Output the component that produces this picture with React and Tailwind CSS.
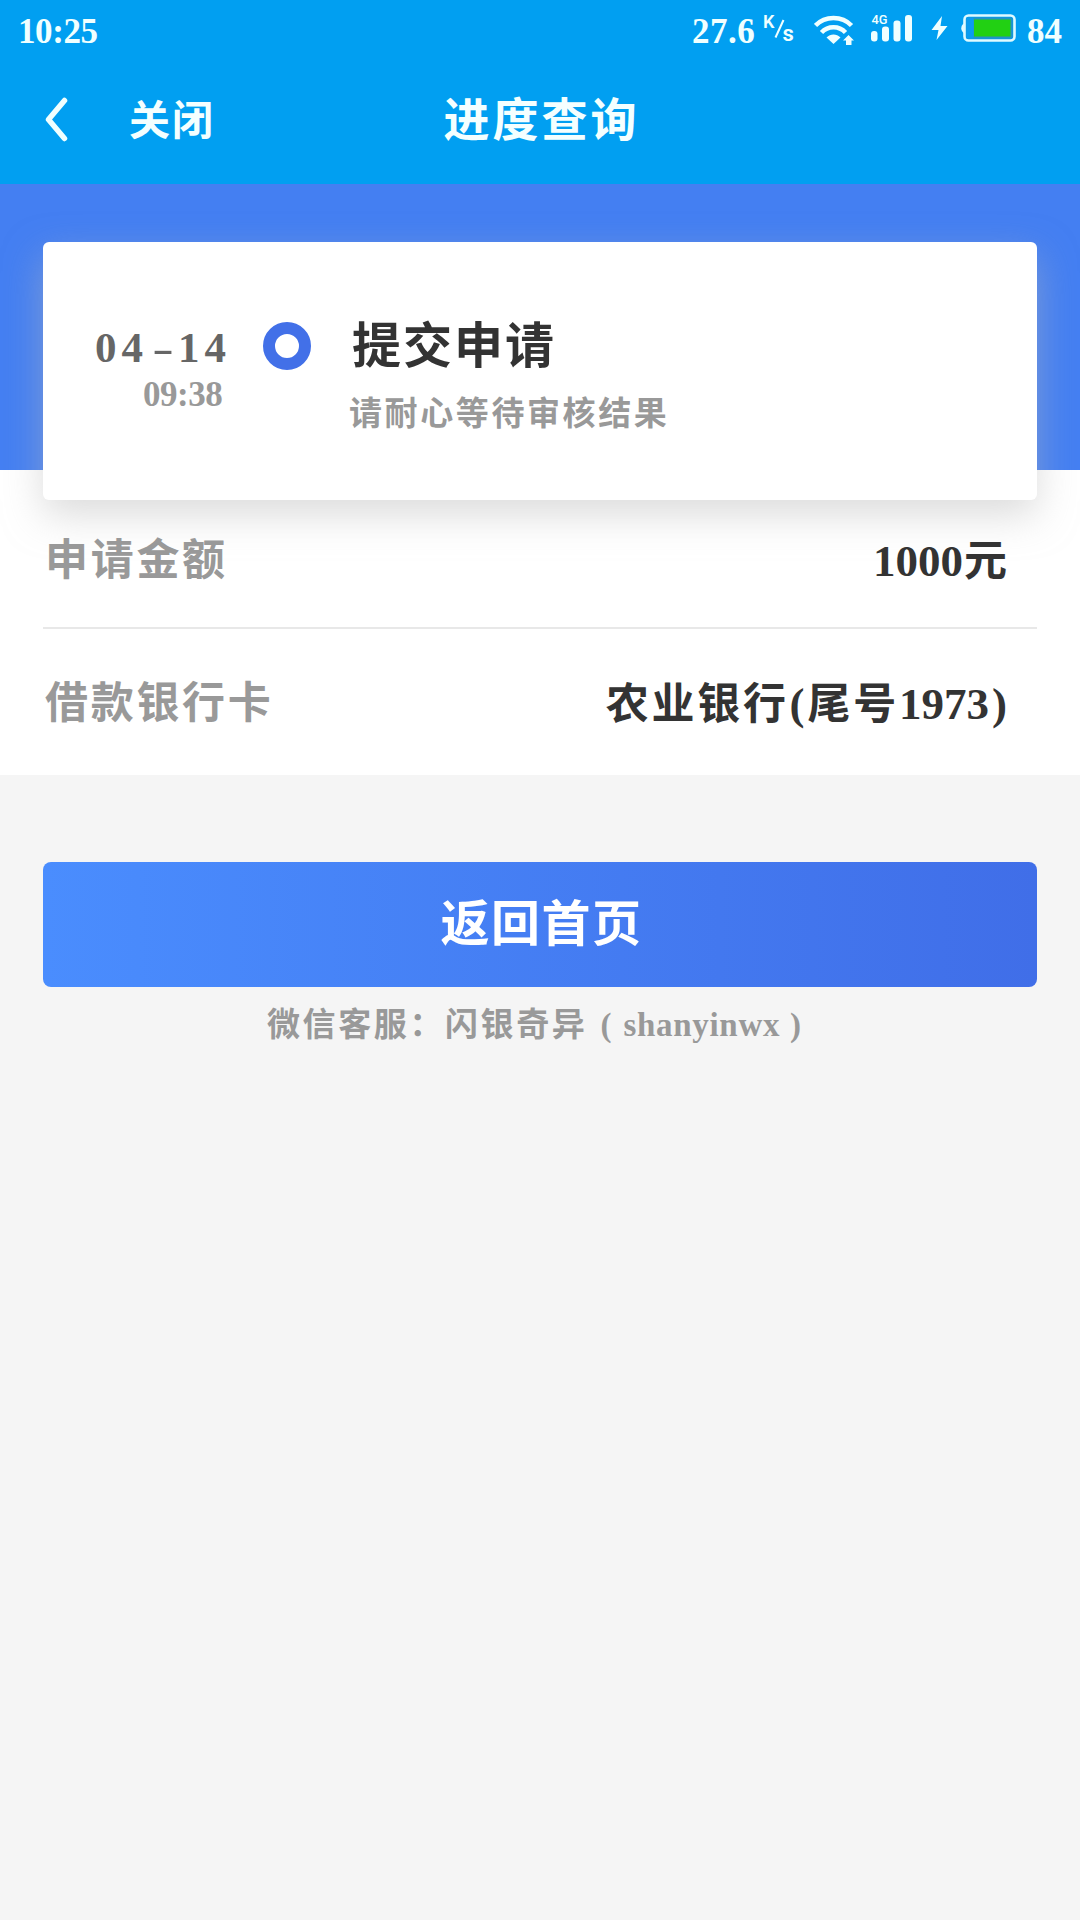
function WifiIcon() {
  return (
    <svg className="block h-[34px] w-[42px]" viewBox="0 0 42 34" fill="none">
      <g stroke="#f0ffff" strokeWidth="4.500">
        <path d="M1.500 13.500C11 3.500 28 3.500 37.500 13.500" />
        <path d="M7.500 20.500C14 13.500 25 13.500 31.500 20.500" />
      </g>
      <path d="M12.500 25.500C16.500 21.500 22.500 21.500 26.500 25.500L19.500 32Z" fill="#f0ffff" />
      <path d="M34.500 23L40 28.500H37.500V33H32V28.500H29Z" fill="#f0ffff" />
    </svg>
  );
}

function SignalIcon() {
  return (
    <svg className="block h-[34px] w-[42px]" viewBox="0 0 42 34" fill="#f0ffff">
      <text x="0.500" y="12" fontFamily="Roboto" fontSize="13" fontWeight="500" textLength="16" lengthAdjust="spacingAndGlyphs">4G</text>
      <rect x="0" y="19" width="6.500" height="10.500" rx="3" />
      <rect x="11" y="14.500" width="7" height="15" rx="3" />
      <rect x="22.500" y="8.500" width="7" height="21" rx="3" />
      <rect x="34" y="3" width="7" height="26.500" rx="3" />
    </svg>
  );
}

function BatteryIcon() {
  return (
    <svg className="block h-[34px] w-[58px]" viewBox="0 0 58 34">
      <path d="M4 11.500A5.500 5.500 0 0 0 4 21Z" fill="#e6fbff" />
      <rect x="4.500" y="3.500" width="50" height="25" rx="4" fill="none" stroke="#dffaff" strokeWidth="2.600" />
      <rect x="6.500" y="5.500" width="46" height="21" rx="2" fill="#2492c4" />
      <rect x="6.500" y="5.500" width="7" height="21" fill="#0a9cf0" />
      <rect x="14" y="7.500" width="36.500" height="17" fill="#22d013" />
    </svg>
  );
}

function StatusBar() {
  return (
    <div className="flex h-[60px] items-start pl-[18px] pt-[12px] text-[35px] leading-[40px] text-[#f0ffff]">
      <span className="tracking-[-0.400px]">10:25</span>
      <div className="ml-auto flex w-[388px] items-start">
        <span className="w-[71px] tracking-[0.500px]">27.6</span>
        <svg className="block h-[34px] w-[33px]" viewBox="0 0 33 34" fill="#f0ffff">
          <text x="0" y="15.500" fontFamily="Roboto" fontSize="18" fontWeight="600">K</text>
          <path d="M20.500 8L12.500 25.500" stroke="#f0ffff" strokeWidth="2" />
          <text x="19.500" y="28.500" fontFamily="Roboto" fontSize="22" fontWeight="600">s</text>
        </svg>
        <div className="ml-[18px]"><WifiIcon /></div>
        <div className="ml-[15px]"><SignalIcon /></div>
        <svg className="ml-[18px] block h-[34px] w-[18px]" viewBox="0 0 18 34" fill="#f0ffff">
          <path d="M11 4L0.500 18H7.500L5.500 28L16.500 14H9.500Z" />
        </svg>
        <div className="ml-[11px]"><BatteryIcon /></div>
        <span className="ml-[9px]">84</span>
      </div>
    </div>
  );
}

function NavBar() {
  return (
    <div className="grid h-[125px] grid-cols-[1fr_auto_1fr] items-start pt-[35px] text-[#f4ffff]">
      <div className="flex items-start">
        <svg className="ml-[45px] block h-[48px] w-[24px]" viewBox="0 0 24 48" fill="none" stroke="#f0ffff" strokeWidth="5.500" strokeLinecap="round" strokeLinejoin="round">
          <path d="M19.500 5.500L3.500 24.500L19.500 43.500" />
        </svg>
        <span className="ml-[60px] text-[41px] leading-[52px] tracking-[2px]">关闭</span>
      </div>
      <h1 className="pl-[3px] text-[46px] leading-[52px] tracking-[3px]">进度查询</h1>
    </div>
  );
}

function Row({ label, children, className }) {
  return (
    <div className={"flex items-start justify-between pl-[2px] pr-[30px] text-[43px] leading-[60px] " + className}>
      <span className="tracking-[2.700px] text-[#999]">{label}</span>
      <span className="text-[#333]">{children}</span>
    </div>
  );
}

export default function App() {
  return (
    <div className="min-h-[1920px] w-[1080px] overflow-hidden bg-[#f5f5f5] font-['Liberation_Serif','Noto_Sans_CJK_SC',serif] font-bold" lang="zh-CN">
      <header className="h-[184px] bg-[#019ff1]">
        <StatusBar />
        <NavBar />
      </header>

      <main>
        <div className="h-[591px] bg-white">
          <div className="h-[286px] bg-[#447ff2] px-[43px] pt-[58px]">
            <section className="flex h-[258px] rounded-[6px] bg-white shadow-[0_15px_38px_rgba(185,185,185,0.5)]">
              <div className="w-[187px] pt-[81px]">
                <div className="whitespace-nowrap pl-[52px] text-[43px] leading-[50px] tracking-[5px] text-[#666]">
                  04<span className="inline-block w-[30px] scale-x-150 text-center font-normal tracking-normal">-</span>14
                </div>
                <div className="pl-[100px] pt-[2px] text-[35px] leading-[40px] tracking-[-0.500px] text-[#999]">09:38</div>
              </div>
              <div className="ml-[33px] mt-[80px] size-[48px] rounded-full border-[12px] border-[#4270e8]" />
              <div className="pt-[75px]">
                <h2 className="pl-[41px] text-[49px] leading-[60px] tracking-[2px] text-[#333]">提交申请</h2>
                <p className="pl-[38px] pt-[13px] text-[33px] leading-[48px] tracking-[2.600px] text-[#999]">请耐心等待审核结果</p>
              </div>
            </section>
          </div>

          <div className="px-[43px] pt-[61px]">
            <Row label="申请金额" className="h-[98px] border-b-2 border-[#e8e8e8]">
              <span className="text-[45px]">1000</span><span className="ml-px">元</span>
            </Row>
            <Row label="借款银行卡" className="pt-[45px]">
              <span className="tracking-[2.700px]">农业银行</span>
              <span className="pl-px pr-[3px] text-[45px]">(</span>
              <span className="tracking-[2.700px]">尾号</span>
              <span className="text-[45px]">1973</span>
              <span className="pl-[3px] text-[45px]">)</span>
            </Row>
          </div>
        </div>

        <div className="px-[43px] pt-[87px]">
          <button type="button" className="block h-[125px] w-full rounded-[8px] bg-linear-to-r from-[#4a8dfe] to-[#406ee8] pl-[3px] text-[49px] leading-[122px] tracking-[1.500px] text-white">返回首页</button>
          <p className="flex items-start pl-[224px] pt-[8px] text-[33px] leading-[60px] tracking-[2.600px] text-[#999]">
            <span>微信客服：闪银奇异</span>
            <span className="pl-[13px] tracking-normal">(</span>
            <span className="pl-[12px] pr-[10px] tracking-[0.700px]">shanyinwx</span>
            <span className="tracking-normal">)</span>
          </p>
        </div>
      </main>
    </div>
  );
}
